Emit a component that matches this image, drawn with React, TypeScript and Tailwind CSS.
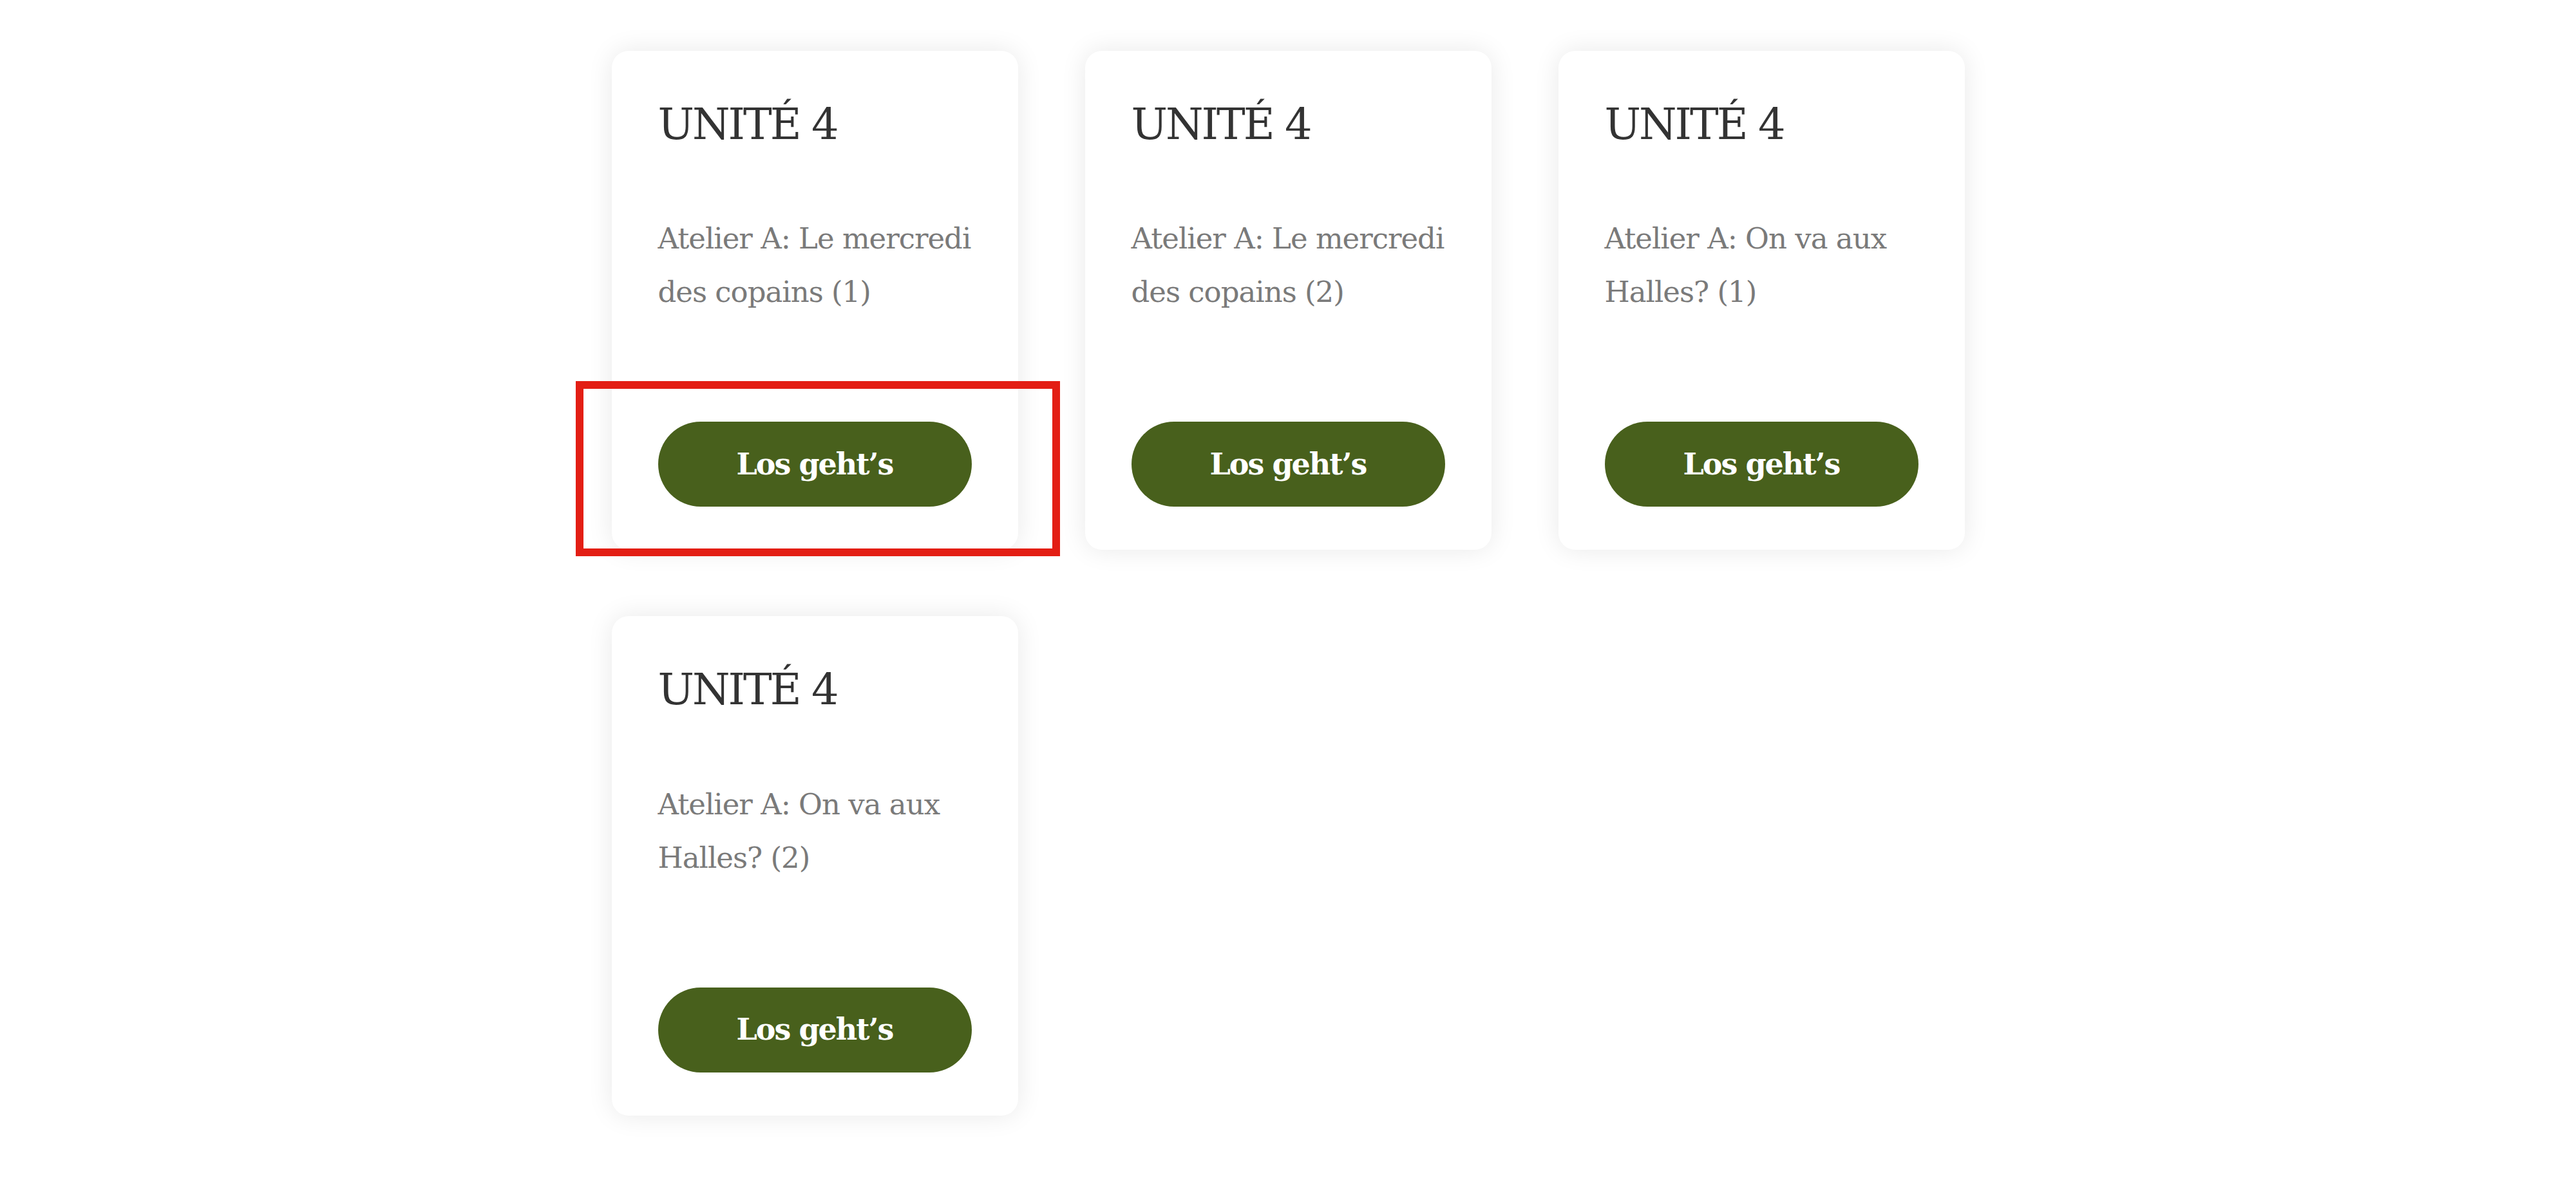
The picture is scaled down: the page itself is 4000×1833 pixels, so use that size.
const lessons = [
  { unit: 'UNITÉ 4', title: 'Atelier A: Le mercredi des copains (1)' },
  { unit: 'UNITÉ 4', title: 'Atelier A: Le mercredi des copains (2)' },
  { unit: 'UNITÉ 4', title: 'Atelier A: On va aux Halles? (1)' },
  { unit: 'UNITÉ 4', title: 'Atelier A: On va aux Halles? (2)' },
];

function LessonCard({ unit, title }: { unit: string; title: string }) {
  return (
    <div className="flex w-[631px] flex-col rounded-[26px] bg-white px-[72px] pt-[74px] pb-[67px] shadow-[0_0_40px_rgba(0,0,0,0.09)]">
      <h3 className="mb-[96px] text-[67px] leading-[1.2] font-normal tracking-[-3px] text-[#333333]">{unit}</h3>
      <p className="h-[166px] text-[45px] leading-[83px] tracking-[-1px] text-[#7a7a7a]">{title}</p>
      <button className="mt-[160px] h-[132px] w-full rounded-full bg-[#48601c] text-[46px] font-bold tracking-[-2px] text-white">
        Los geht’s
      </button>
    </div>
  );
}

export default function App() {
  return (
    <div className="min-h-screen bg-white font-['DejaVu_Serif','Liberation_Serif',serif]">
      <div className="relative mx-auto grid w-[2101px] grid-cols-[repeat(3,631px)] gap-x-[104px] gap-y-[103px] pt-[79px] pb-[100px]">
        {lessons.map((l, i) => (
          <LessonCard key={i} unit={l.unit} title={l.title} />
        ))}
        <div className="pointer-events-none absolute top-[592px] left-[-56px] h-[272px] w-[752px] border-[12px] border-[#e31e14]" />
      </div>
    </div>
  );
}
